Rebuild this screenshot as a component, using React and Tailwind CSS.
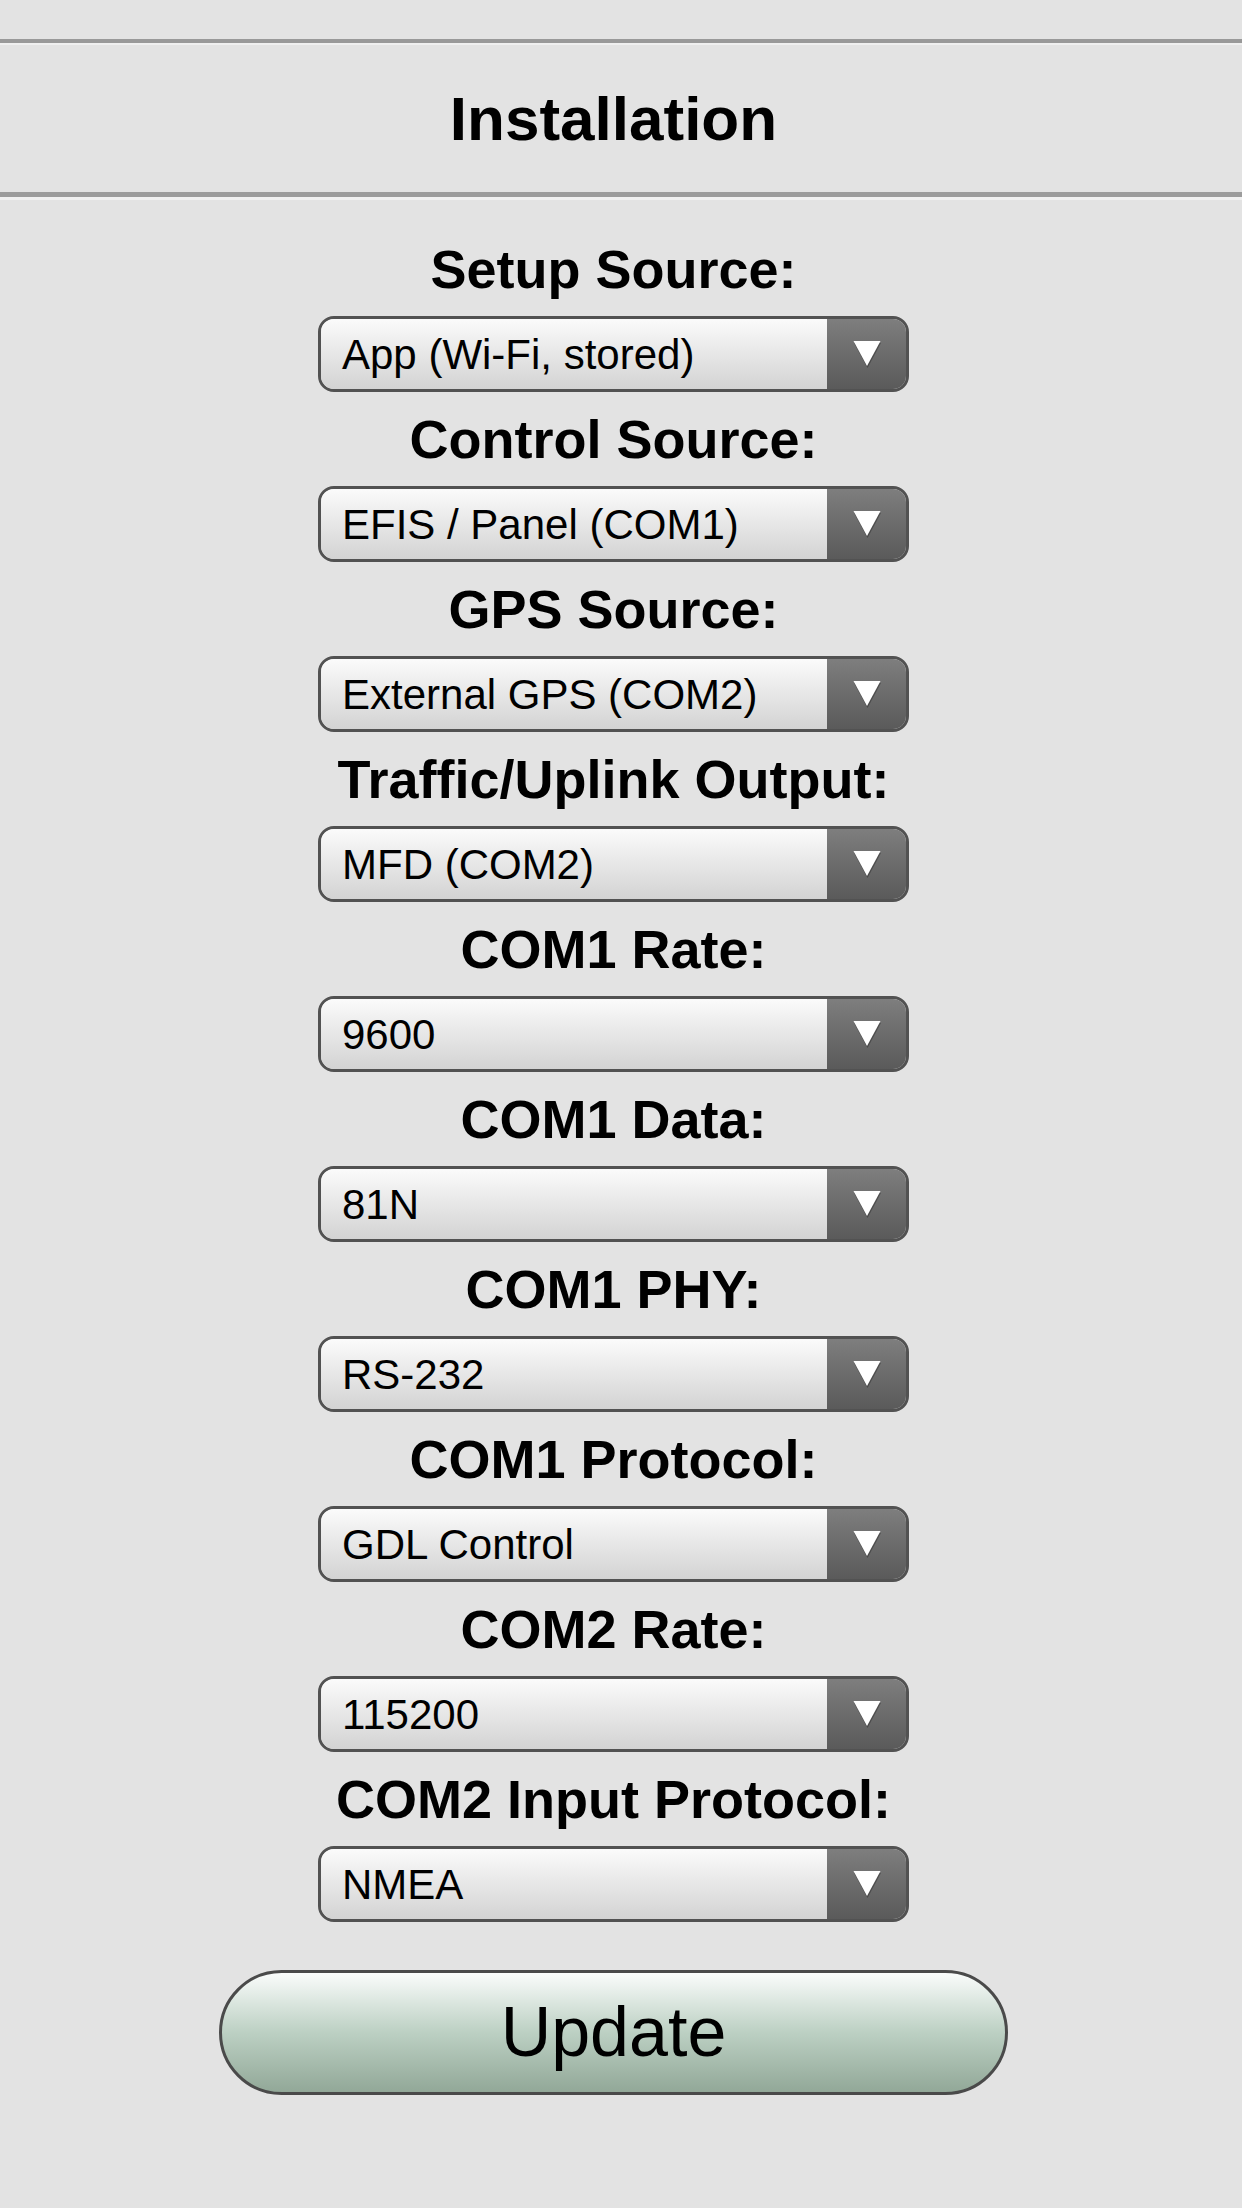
const fields = [
  { label: "Setup Source:", value: "App (Wi-Fi, stored)" },
  { label: "Control Source:", value: "EFIS / Panel (COM1)" },
  { label: "GPS Source:", value: "External GPS (COM2)" },
  { label: "Traffic/Uplink Output:", value: "MFD (COM2)" },
  { label: "COM1 Rate:", value: "9600" },
  { label: "COM1 Data:", value: "81N" },
  { label: "COM1 PHY:", value: "RS-232" },
  { label: "COM1 Protocol:", value: "GDL Control" },
  { label: "COM2 Rate:", value: "115200" },
  { label: "COM2 Input Protocol:", value: "NMEA" },
];

function Dropdown({ value }) {
  return (
    <div className="flex h-[76px] w-[591px] overflow-hidden rounded-[16px] border-[3px] border-[#525252]">
      <div className="flex flex-1 items-center bg-gradient-to-b from-[#fbfbfb] to-[#d3d3d3] pl-[21px] text-[42px] text-black">
        {value}
      </div>
      <div className="flex w-[79px] items-center justify-center bg-gradient-to-b from-[#7e7e7e] to-[#5a5a5a]">
        <svg width="30" height="28" viewBox="0 0 30 28">
          <polygon points="2,3 29,3 15.5,28" fill="#2e2e2e" opacity="0.5" />
          <polygon points="1.5,1 28.5,1 15,26" fill="#ffffff" />
        </svg>
      </div>
    </div>
  );
}

export default function App() {
  return (
    <div className="min-h-[2208px] bg-[#e3e3e3] font-['Liberation_Sans',Arial,sans-serif] text-black">
      {/* header */}
      <div className="h-[39px]" />
      <div className="h-[4px] bg-[#999999]" />
      <div className="h-[2px] bg-[#efefef]" />
      <h1 className="flex h-[147px] items-center justify-center pr-[15px] text-[62px] font-bold">
        Installation
      </h1>
      <div className="h-[5px] bg-[#9c9c9c]" />
      <div className="h-[3px] bg-[#f1f1f1]" />

      {/* settings */}
      <div className="flex flex-col items-center pr-[15px] pt-[22px]">
        {fields.map((f) => (
          <div key={f.label} className="flex flex-col items-center">
            <div className="flex h-[94px] items-center justify-center text-[54px] font-bold">
              {f.label}
            </div>
            <Dropdown value={f.value} />
          </div>
        ))}

        <button className="mt-[48px] flex h-[125px] w-[789px] items-center justify-center rounded-full border-[3px] border-[#4a4a4a] bg-gradient-to-b from-[#fafcfb] via-[#bcd0c3] to-[#92a898] text-[70px] text-black">
          Update
        </button>
      </div>
    </div>
  );
}
